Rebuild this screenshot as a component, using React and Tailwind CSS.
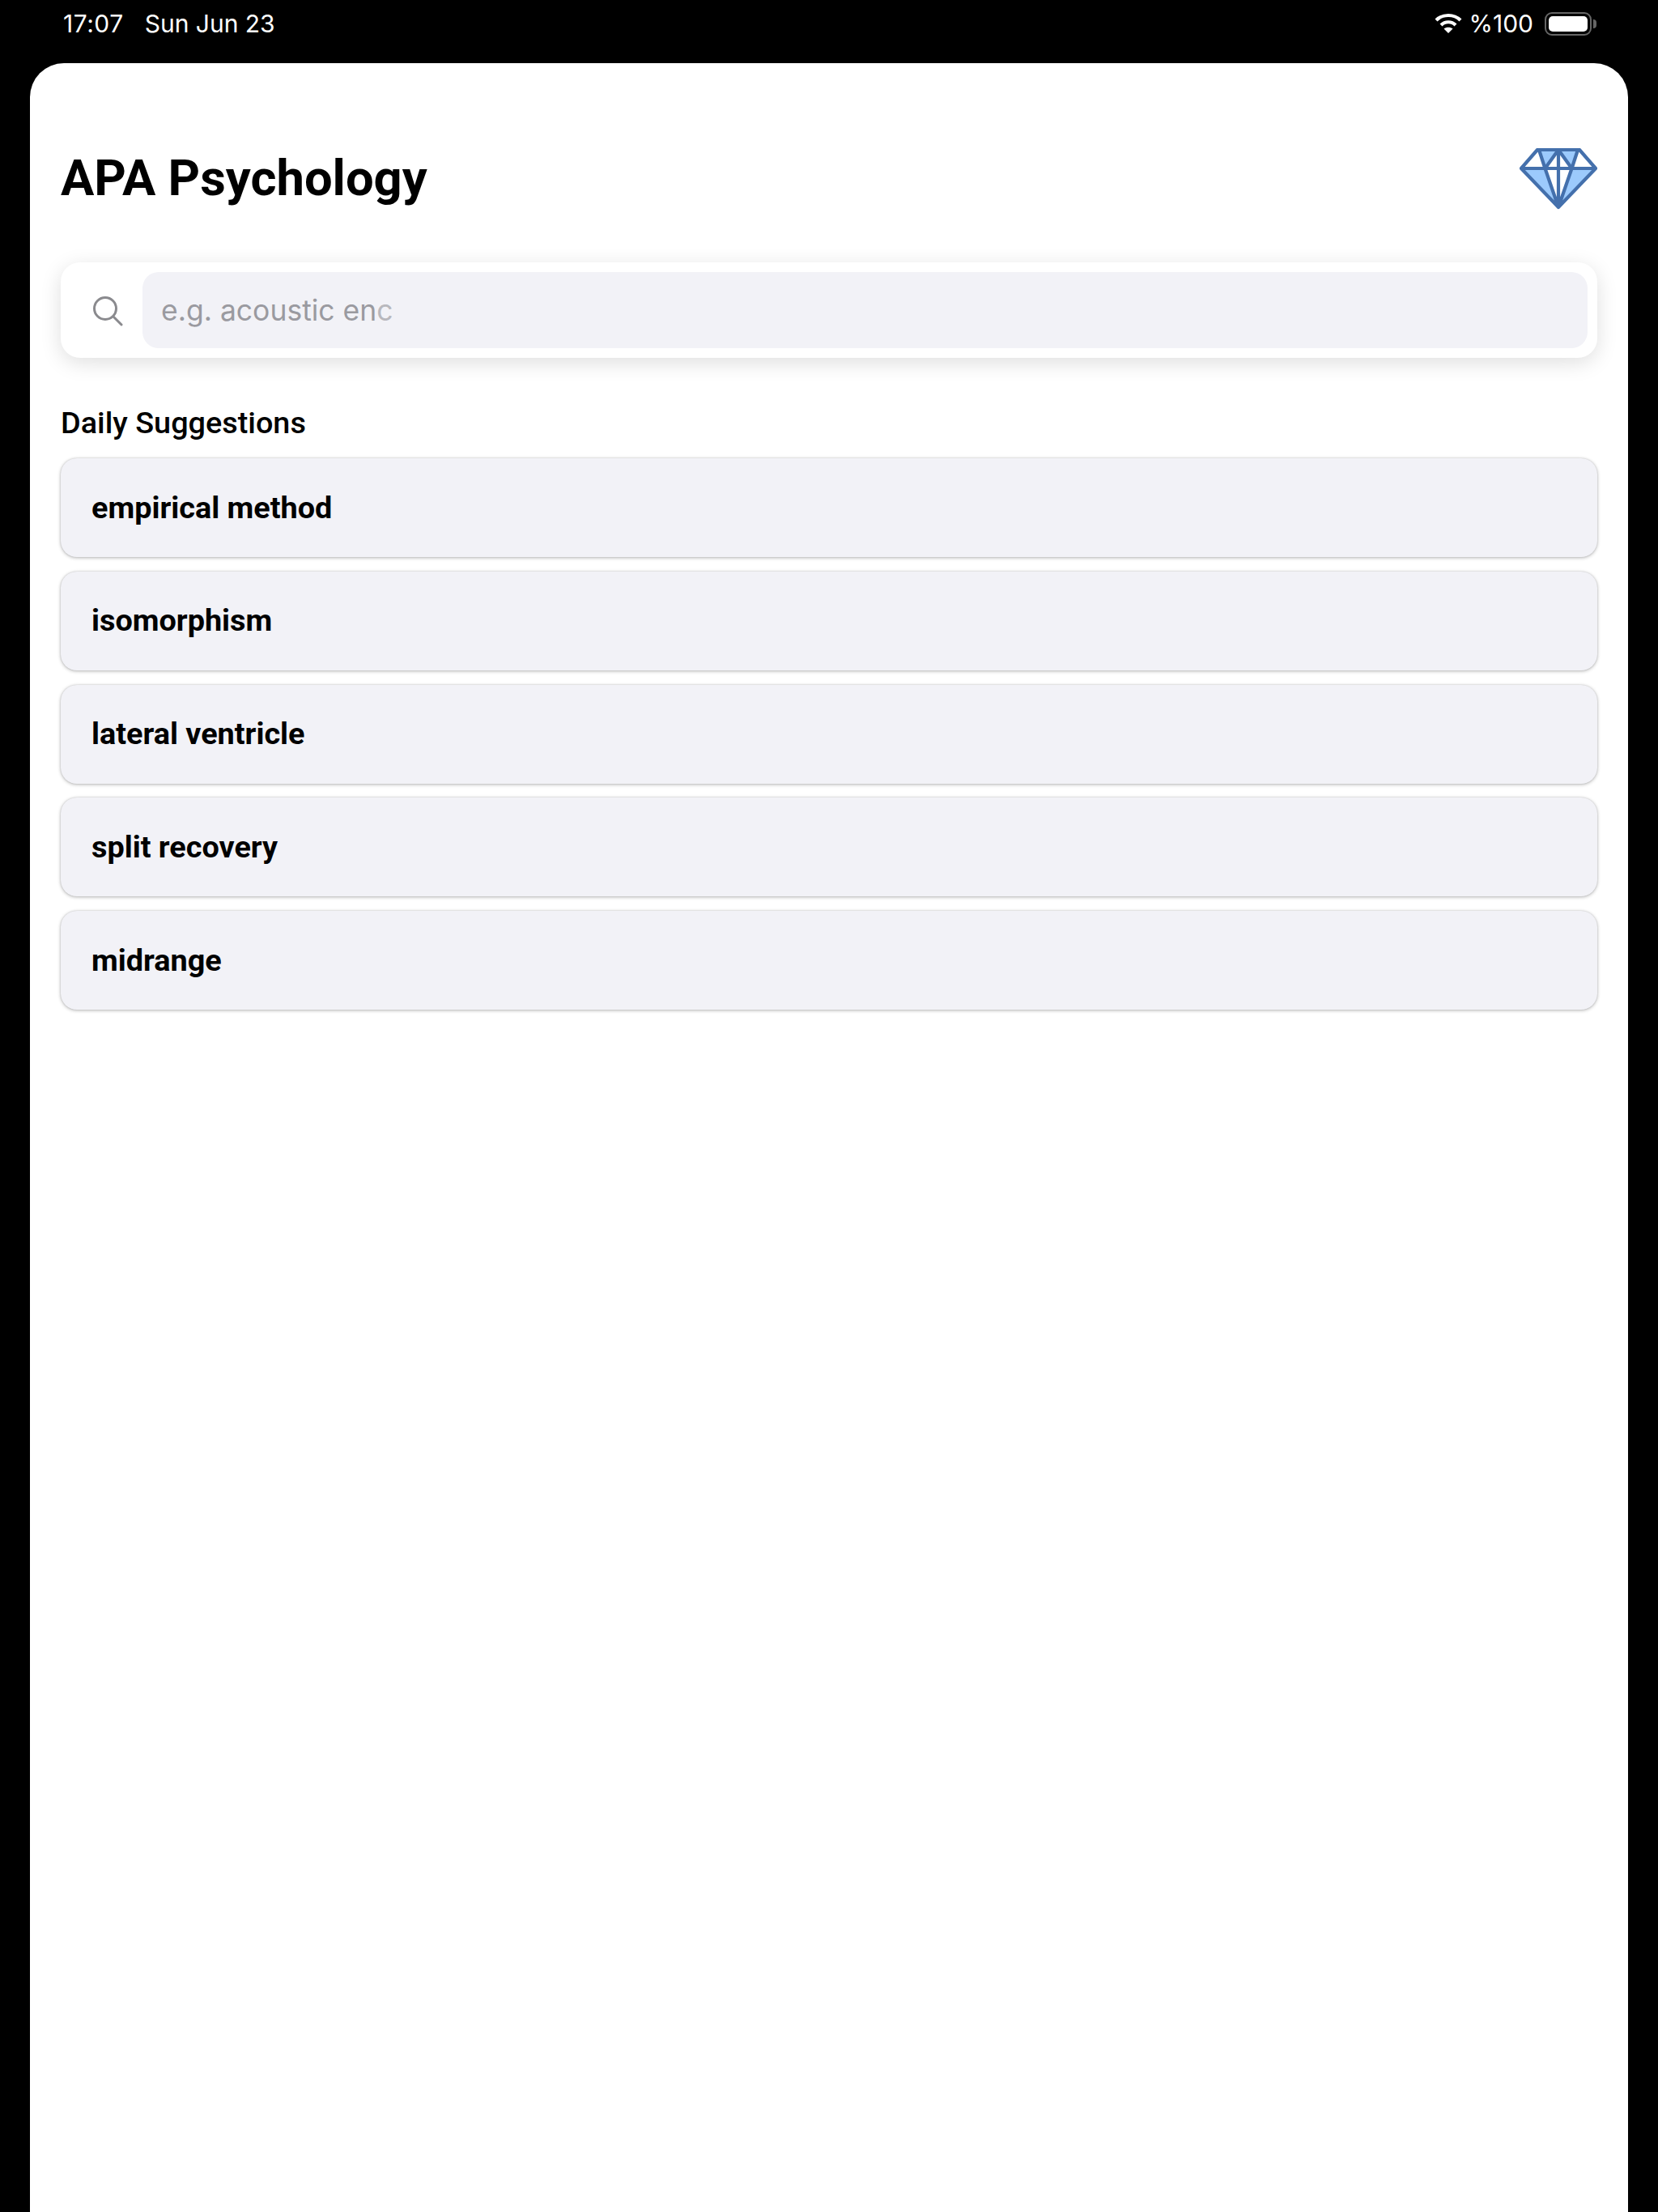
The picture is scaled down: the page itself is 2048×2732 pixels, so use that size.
const items = ["empirical method", "isomorphism", "lateral ventricle", "split recovery", "midrange"];

function Diamond() {
  return (
    <svg width="96" height="76" viewBox="0 0 96 76" fill="none" className="mt-[2px]">
      <path d="M22 2 L74 2 L94 25 L48 73 L2 25 Z" fill="#fff" />
      <path d="M24 2 L31.5 25 L47 2 Z M49 2 L64.5 25 L72 2 Z" fill="#9ccafc" />
      <path d="M2 25 L31.5 25 L48 73 Z M94 25 L64.5 25 L48 73 Z" fill="#9ccafc" />
      <path d="M22 2 L74 2 L94 25 L48 73 L2 25 Z M2 25 L94 25 M24 2 L31.5 25 L48 2 L64.5 25 L72 2 M31.5 25 L48 73 L64.5 25 M48 2 L48 73" stroke="#4470ac" strokeWidth="4.2" strokeLinejoin="round" />
    </svg>
  );
}

export default function App() {
  return (
    <div className="h-[2732px] w-[2048px] overflow-hidden bg-black font-['Roboto',sans-serif]">
      <header className="flex h-[78px] items-start justify-between pl-[78px] pr-[76px] pt-[12px] font-['Inter',sans-serif] text-[30px] leading-[34px] text-white">
        <div className="flex gap-[26px]">
          <span className="tracking-[0.5px]">17:07</span>
          <span>Sun Jun 23</span>
        </div>
        <div className="flex items-center">
          <svg width="34" height="26" viewBox="0 0 34 26" fill="none" stroke="#fff" strokeWidth="4.2">
            <path d="M2 9 C10 1 24 1 32 9" />
            <path d="M8 15 C13 10 21 10 26 15" />
            <path d="M17 25 L11.5 19.5 C14.5 17 19.5 17 22.5 19.5 Z" fill="#fff" stroke="none" />
          </svg>
          <span className="ml-[8px]">%100</span>
          <div className="ml-[14px] flex items-center gap-[2px]">
            <div className="h-[29px] w-[58px] rounded-[9px] border-[2px] border-[#666] p-[3px]">
              <div className="h-full w-full rounded-[5px] bg-white" />
            </div>
            <div className="h-[11px] w-[4px] rounded-r-full bg-[#666]" />
          </div>
        </div>
      </header>

      <main className="ml-[37px] h-[2654px] w-[1974px] rounded-t-[42px] bg-white px-[38px] pt-[103px]">
        <div className="flex h-[78px] items-center justify-between">
          <h1 className="text-[61.5px] font-bold leading-[78px] text-black">APA Psychology</h1>
          <Diamond />
        </div>

        <div className="mt-[65px] flex h-[118px] items-center rounded-[24px] bg-white pl-[39px] pr-[12px] shadow-[0_6px_26px_rgba(0,0,0,0.13)]">
          <svg width="38" height="38" viewBox="0 0 38 38" fill="none" stroke="#8a8a8e" strokeWidth="3" strokeLinecap="round" className="mt-[1px] shrink-0">
            <circle cx="16" cy="16" r="13.5" />
            <path d="M26 26 L36 36" />
          </svg>
          <div className="ml-[24px] flex h-[94px] flex-1 items-center rounded-[20px] bg-[#f2f2f7] pl-[23px] pt-[2px] font-['Inter',sans-serif] text-[35.5px] text-[#9a9aa0]">
            e.g. acoustic en<span className="text-[#b8b8bd]">c</span>
          </div>
        </div>

        <h2 className="mt-[58px] text-[37.8px] font-medium leading-[44px] text-black">Daily Suggestions</h2>

        <ul className="mt-[22px] flex flex-col gap-[17.75px]">
          {items.map((item) => (
            <li key={item} className="flex h-[122px] items-center rounded-[20px] bg-[#f2f2f7] pl-[38px] text-[37.8px] font-bold text-black shadow-[0_1px_4px_rgba(0,0,0,0.28),0_0_2px_rgba(0,0,0,0.15)]">
              {item}
            </li>
          ))}
        </ul>
      </main>
    </div>
  );
}
